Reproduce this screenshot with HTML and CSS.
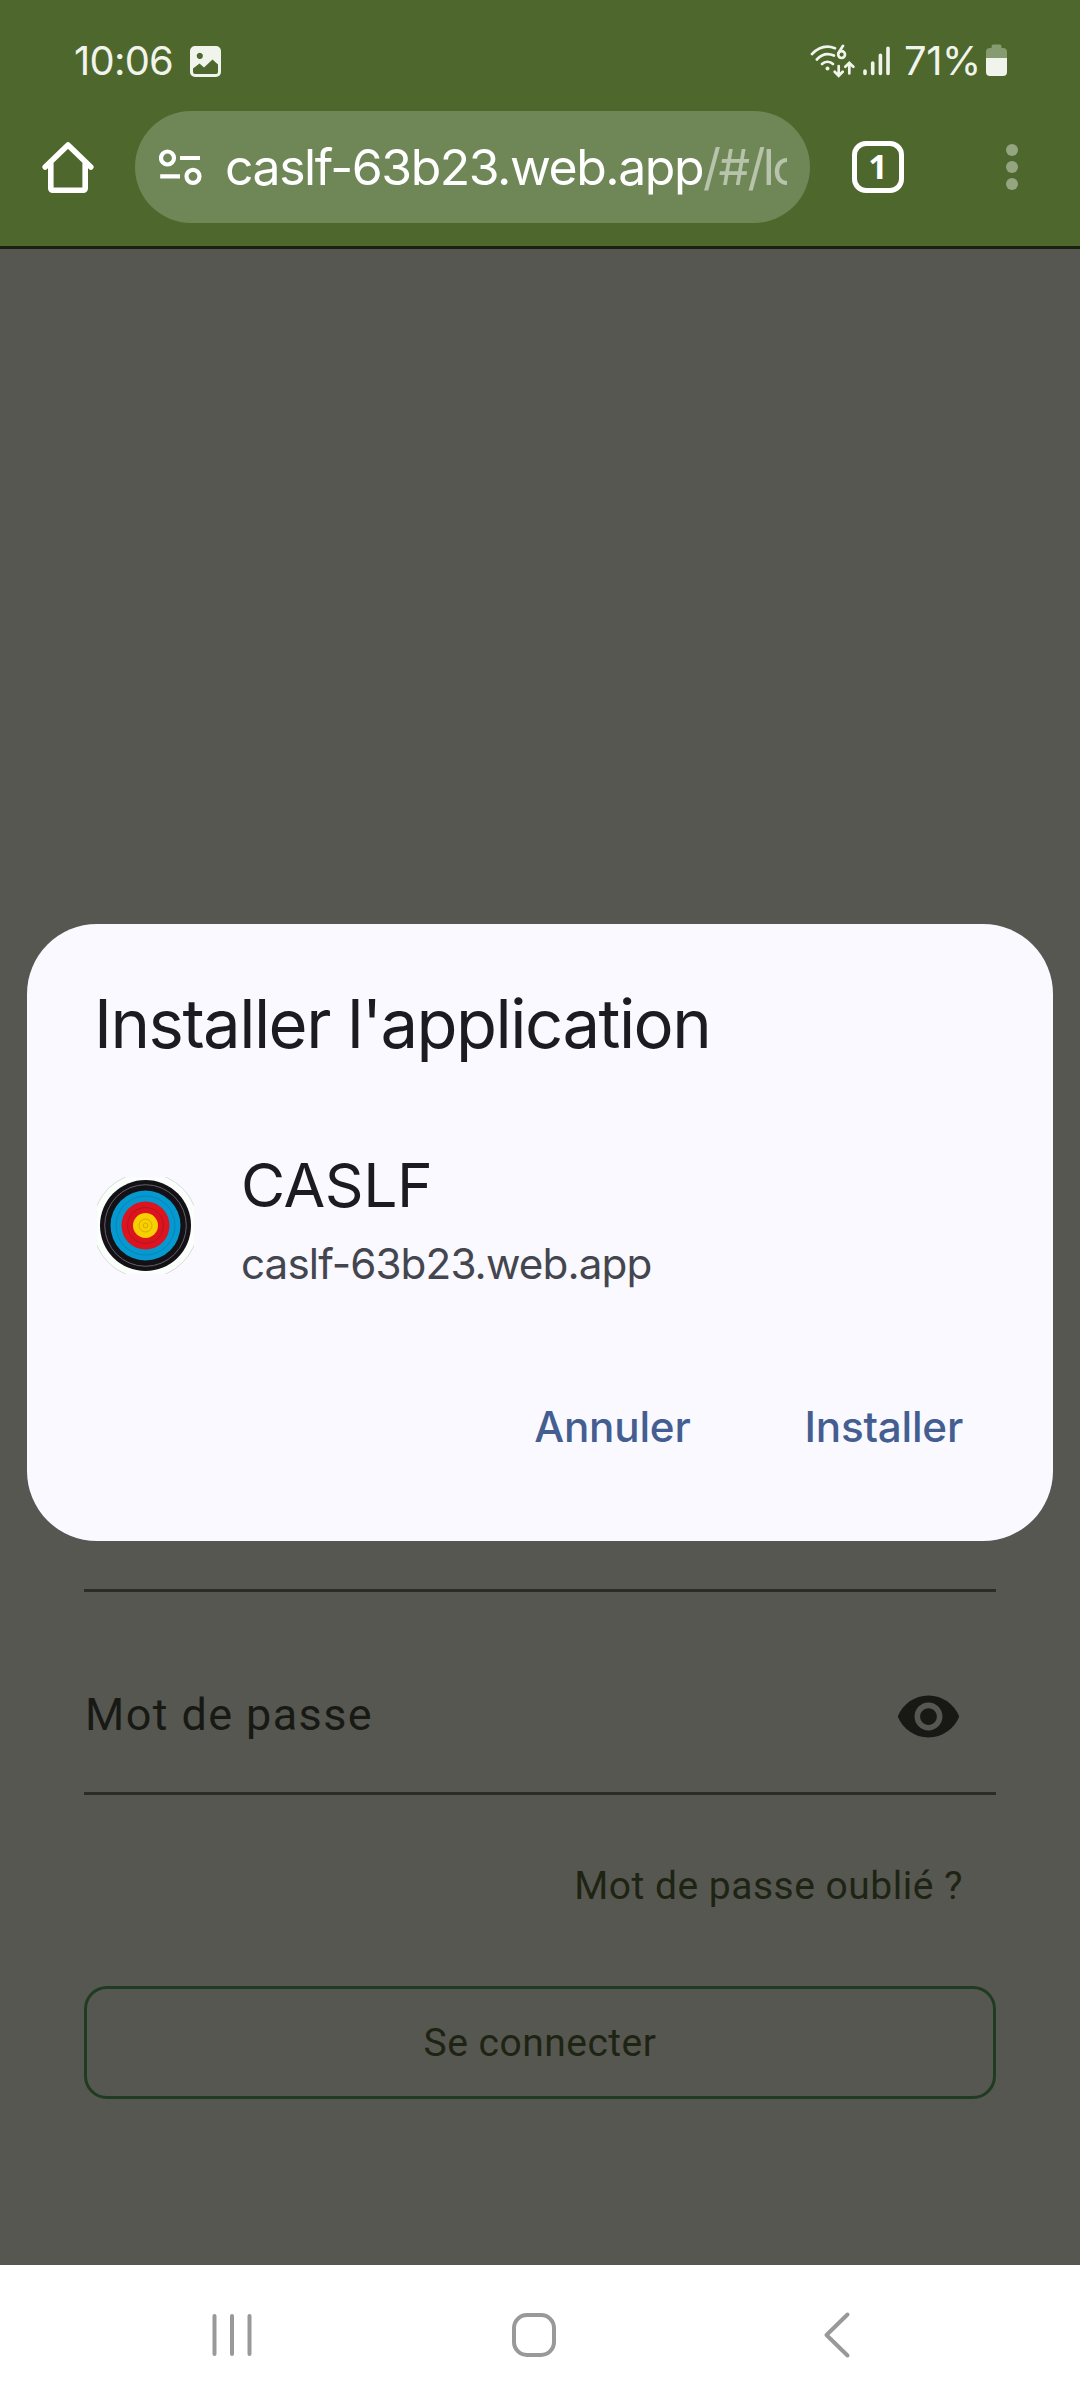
FILE: index.html
```html
<!DOCTYPE html>
<html lang="fr">
<head>
<meta charset="utf-8">
<title>CASLF</title>
<link rel="stylesheet" href="styles.css">
</head>
<body>
<div class="screen">
  <header class="chrome">
    <div class="status">
      <span class="clock">10:06</span>
      <svg class="picture-icon" width="31" height="31" viewBox="0 0 31 31">
        <path fill="#f1f4ec" fill-rule="evenodd" d="M5 0H26a5 5 0 0 1 5 5V26a5 5 0 0 1-5 5H5a5 5 0 0 1-5-5V5a5 5 0 0 1 5-5ZM3 22.5V26a2 2 0 0 0 2 2H26a2 2 0 0 0 2-2V18.500L22.500 13.500L14 21.500L9.500 17.500ZM9.800 6.800a3.100 3.100 0 1 0 .01 0Z"/>
      </svg>
      <div class="status-right">
        <svg class="wifi" width="45" height="34" viewBox="0 0 45 34" fill="none" stroke="#f1f4ec" stroke-width="2.700" stroke-linecap="round">
          <path d="M2 10C8.500 3.200 17 1 25 4.200"/>
          <path d="M6.800 15.500C11.500 10.300 18 8.800 24 11.500"/>
          <path d="M12 20C15 17 20 17 23 20"/>
          <circle cx="17.500" cy="24.600" r="2" fill="#f1f4ec" stroke="none"/>
          <circle cx="31.600" cy="10.600" r="3.400"/>
          <path d="M33 1.800L28.600 8.800"/>
          <path d="M28.700 22v9.500M24.700 27.800L28.700 31.800L32.700 27.800M39.300 29.500V19.500M35.300 22.800L39.300 18.800L43.300 22.800"/>
        </svg>
        <svg class="signal" width="28" height="30" viewBox="0 0 28 30" stroke="#f1f4ec" stroke-width="3.600" stroke-linecap="round">
          <path d="M2 25V27.500M9.700 17V27.500M17.400 9.300V27.500M25 2.300V27.500"/>
        </svg>
        <span class="percent">71%</span>
        <svg class="battery" width="21" height="32" viewBox="0 0 21 32">
          <path fill="#879b70" d="M5.500 4V2.500a2 2 0 0 1 2-2h6a2 2 0 0 1 2 2V4h1.500a4 4 0 0 1 4 4v6H0V8a4 4 0 0 1 4-4Z"/>
          <path fill="#f1f4ec" d="M0 14H21V28a4 4 0 0 1-4 4H4a4 4 0 0 1-4-4Z"/>
        </svg>
      </div>
    </div>
    <div class="toolbar">
      <svg class="home" width="52" height="53" viewBox="0 0 52 53" fill="none" stroke="#fff" stroke-width="5.600" stroke-linecap="round" stroke-linejoin="round">
        <path d="M3.200 26L26 4L48.800 26"/>
        <path d="M8.800 23V47.500a1.800 1.800 0 0 0 1.800 1.800H41.400a1.800 1.800 0 0 0 1.800-1.800V23"/>
      </svg>
      <div class="omnibox">
        <svg class="tune" width="43" height="37" viewBox="0 0 43 37" fill="none" stroke="#fff" stroke-width="4.200">
          <circle cx="8.500" cy="9" r="6.500"/><path d="M21 9H41M1.200 27.300H21"/><circle cx="34" cy="27.300" r="6.500"/>
        </svg>
        <div class="url"><span class="host">caslf-63b23.web.app</span><span class="path">/#/lo</span></div>
      </div>
      <div class="tabs">1</div>
      <div class="menu"><i class="dot"></i><i class="dot"></i><i class="dot"></i></div>
    </div>
  </header>

  <main class="page">
    <div class="field field-email"></div>
    <div class="field">
      <span class="label">Mot de passe</span>
      <svg class="eye" width="67" height="67" viewBox="0 0 24 24" fill="#181914">
        <path d="M12 4.500C7 4.500 2.730 7.610 1 12c1.730 4.390 6 7.500 11 7.500s9.270-3.110 11-7.500c-1.730-4.390-6-7.500-11-7.500zM12 17c-2.760 0-5-2.240-5-5s2.240-5 5-5 5 2.240 5 5-2.240 5-5 5zm0-8c-1.660 0-3 1.340-3 3s1.340 3 3 3 3-1.340 3-3-1.340-3-3-3z"/>
      </svg>
    </div>
    <div class="forgot">Mot de passe oublié ?</div>
    <div class="login">Se connecter</div>

    <section class="dialog">
      <h1 class="dialog-title">Installer l'application</h1>
      <div class="app">
        <svg class="app-icon" width="97" height="97" viewBox="-48.500 -48.500 97 97">
          <circle r="52.500" fill="#fbfffc" stroke="#cfd4cf" stroke-width=".8"/>
          <circle r="45.500" fill="#131115"/>
          <circle r="40.800" fill="none" stroke="#77757a" stroke-width=".8"/>
          <circle r="35" fill="#0699cf"/>
          <circle r="29.500" fill="none" stroke="#087fb4" stroke-width=".8"/>
          <circle r="24" fill="#db141f"/>
          <circle r="18" fill="none" stroke="#a9141d" stroke-width=".8"/>
          <circle r="12.500" fill="#f8d000"/>
          <circle r="6.500" fill="none" stroke="#cfa800" stroke-width=".9"/>
          <circle r="2.300" fill="none" stroke="#cfa800" stroke-width=".9"/>
        </svg>
        <div class="app-text">
          <div class="app-name">CASLF</div>
          <div class="app-host">caslf-63b23.web.app</div>
        </div>
      </div>
      <div class="actions"><span class="action">Annuler</span><span class="action">Installer</span></div>
    </section>
  </main>

  <nav class="navbar">
    <svg class="recents" width="42" height="46" viewBox="0 0 42 46" stroke="#999" stroke-width="4" stroke-linecap="round"><path d="M3.500 4V42M21 4V42M38.500 4V42"/></svg>
    <svg class="nav-home" width="46" height="46" viewBox="0 0 46 46" fill="none" stroke="#999" stroke-width="4"><rect x="3" y="3" width="40" height="40" rx="13"/></svg>
    <svg class="back" width="28" height="48" viewBox="0 0 28 48" fill="none" stroke="#999" stroke-width="4" stroke-linecap="round" stroke-linejoin="round"><path d="M24.500 3.500L3.500 24L24.500 44.500"/></svg>
  </nav>
</div>
</body>
</html>
```
FILE: styles.css
```css
* { box-sizing: border-box; }
body { margin: 0; font-family: Inter, Roboto, sans-serif; }
svg { display: block; flex: none; }

.screen { width: 1080px; height: 2400px; display: flex; flex-direction: column; overflow: hidden; }

.chrome { height: 249px; flex: none; padding-top: 16px; background: #4e672c; border-bottom: 3px solid #1a2110; }
.status { height: 89px; display: flex; align-items: center; padding: 0 73px 0 74px; color: #f1f4ec; font-size: 39.900px; white-space: nowrap; }
.clock { width: 116px; letter-spacing: -.75px; }
.picture-icon { margin-top: 2px; }
.status-right { margin-left: auto; display: flex; align-items: center; }
.signal { margin: 0 13px 0 8px; }
.percent { width: 82px; letter-spacing: -.4px; }
.battery { margin-top: -1px; }

.toolbar { height: 124px; display: flex; align-items: center; padding-left: 42px; }
.home { margin-right: 41px; }
.omnibox { width: 675px; height: 112px; border-radius: 56px; background: #6f8757; display: flex; align-items: center; padding-left: 24px; }
.url { width: 562px; margin-left: 23px; overflow: hidden; white-space: nowrap; color: #fff; font-size: 49.900px; line-height: 72px; }
.host { letter-spacing: -1.430px; }
.path { color: #b7c3ab; letter-spacing: -2.600px; }
.tabs { width: 52px; height: 52px; margin-left: 42px; border: 5.500px solid #fff; border-radius: 14px; color: #fff; font: 700 34px/40px "Open Sans", sans-serif; text-align: center; }
.menu { display: flex; flex-direction: column; gap: 5px; margin-left: 102px; }
.dot { width: 12px; height: 12px; border-radius: 50%; background: #94a580; }

.page { height: 2016px; flex: none; position: relative; padding: 0 84px; background: #565751; font-family: Roboto, sans-serif; }
.field { height: 203px; display: flex; align-items: center; justify-content: space-between; padding: 0 34px 0 1px; border-bottom: 3px solid #2a2c25; }
.field-email { height: 1343px; }
.label { color: #181914; font-size: 45px; letter-spacing: 1.400px; line-height: 60px; margin-top: 46px; }
.eye { margin-top: 49px; }
.forgot { height: 60px; margin-top: 61px; padding-right: 33px; text-align: right; color: #1e2413; font-size: 39px; letter-spacing: .500px; line-height: 60px; }
.login { height: 113px; margin-top: 70px; border: 3px solid #1f3b21; border-radius: 23px; text-align: center; color: #1e2413; font-size: 39px; letter-spacing: .500px; line-height: 108px; }

.dialog { position: absolute; left: 27px; top: 675px; width: 1026px; height: 617px; padding: 60px 90px 0 67px; border-radius: 70px; background: #faf9ff; color: #1b1b20; font-family: Inter, sans-serif; }
.dialog-title { margin: 0; font-size: 67px; font-weight: 400; line-height: 80px; letter-spacing: -1.520px; white-space: nowrap; }
.app { display: flex; margin: 86px 0 0 3px; gap: 47px; }
.app-icon { margin-top: 27px; }
.app-name { font-size: 60.500px; line-height: 70px; letter-spacing: -.450px; }
.app-host { margin-top: 16px; color: #44464f; font-size: 42.200px; line-height: 56px; letter-spacing: -.890px; }
.actions { display: flex; justify-content: flex-end; gap: 114px; margin-top: 107px; color: #445e91; font-size: 42.200px; font-weight: 500; line-height: 56px; letter-spacing: -.220px; }

.navbar { flex: 1; display: flex; align-items: center; background: #fff; padding: 5px 0 0 211px; }
.nav-home { margin-left: 258px; }
.back { margin-left: 266px; }
```
